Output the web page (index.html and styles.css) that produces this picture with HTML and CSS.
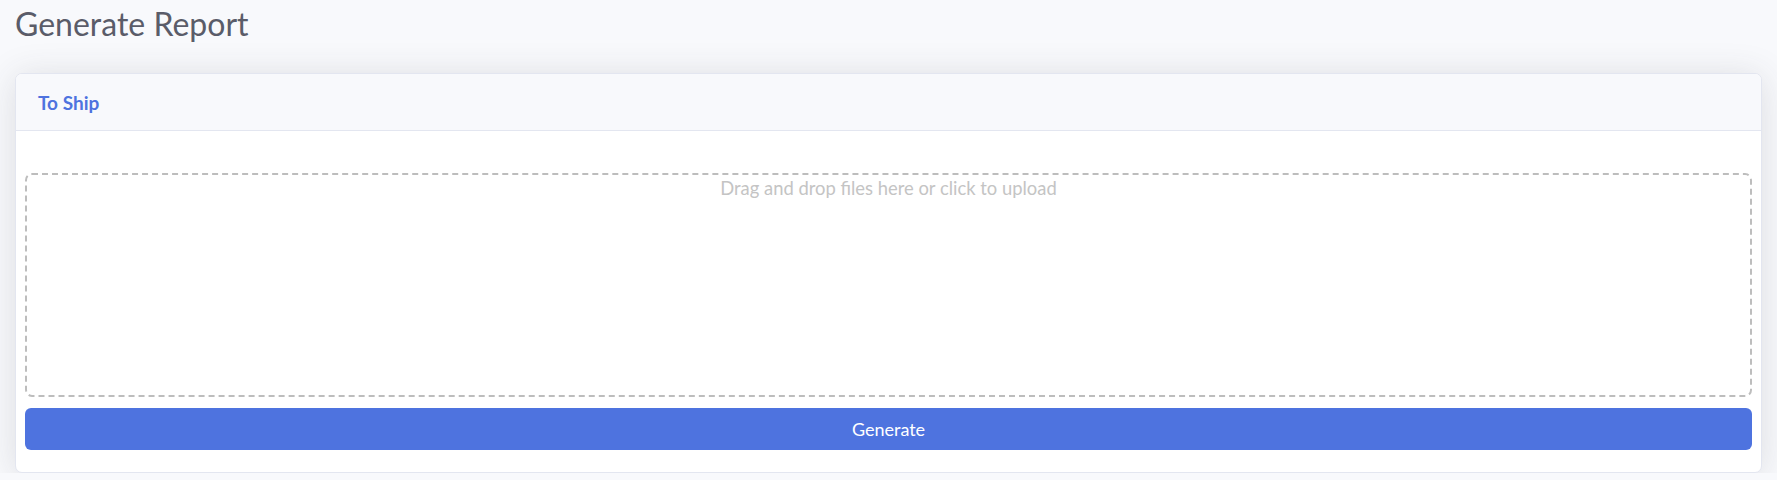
FILE: index.html
```html
<!DOCTYPE html>
<html lang="en">
<head>
<meta charset="utf-8">
<title>Generate Report</title>
<link rel="stylesheet" href="styles.css">
</head>
<body>
<div class="page">
  <h1 class="page-title">Generate Report</h1>
  <div class="card">
    <div class="card-header">
      <h6 class="card-title">To Ship</h6>
    </div>
    <div class="card-body">
      <div class="dropzone">
        <div class="dz-message">Drag and drop files here or click to upload</div>
      </div>
      <button class="btn-generate" type="button">Generate</button>
    </div>
  </div>
</div>
</body>
</html>
```

FILE: styles.css
```css
* { box-sizing: border-box; }
html, body {
  margin: 0;
  padding: 0;
  background: #f8f9fc;
  font-family: "Lato", "Open Sans", sans-serif;
}
.page {
  padding: 0 15px;
}
.page-title {
  margin: 0;
  padding-top: 4px;
  height: 73px;
  font-size: 32px;
  font-weight: 400;
  line-height: 40px;
  color: #5a5c69;
}
.card {
  background: #fff;
  border: 1px solid #e3e6f0;
  border-radius: 7px;
  box-shadow: 0 3px 35px 0 rgba(58, 59, 69, 0.15);
  overflow: hidden;
}
.card-header {
  height: 57px;
  background: #f8f9fc;
  border-bottom: 1px solid #e3e6f0;
  display: flex;
  align-items: center;
  padding: 0 22px;
}
.card-title {
  margin: 0;
  font-size: 19px;
  font-weight: 700;
  color: #4e73df;
}
.card-body {
  padding: 42px 9px 22px;
  display: flex;
  flex-direction: column;
  gap: 11px;
}
.dropzone {
  height: 224px;
  border: 2px dashed #bdbdbd;
  border-radius: 7px;
  padding-top: 1px;
  text-align: center;
}
.dz-message {
  font-size: 18.4px;
  line-height: 24px;
  color: #c4c4c4;
}
.btn-generate {
  height: 42px;
  border: 0;
  border-radius: 6px;
  background: #4e73df;
  color: #fff;
  font-family: inherit;
  font-size: 18px;
  width: 100%;
}
```
